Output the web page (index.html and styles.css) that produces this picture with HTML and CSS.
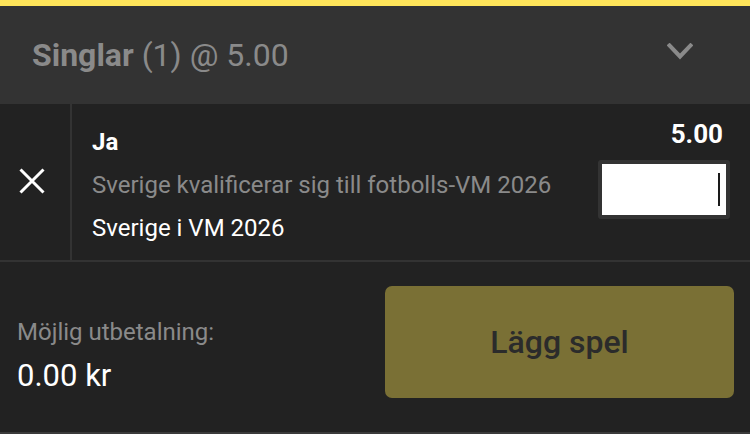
FILE: index.html
```html
<!DOCTYPE html>
<html lang="sv">
<head>
<meta charset="utf-8">
<title>Spelkupong</title>
<link rel="stylesheet" href="styles.css">
</head>
<body>
<div class="slip">
  <div class="accent"></div>
  <header class="slip-head">
    <div class="title"><b>Singlar</b> (1) @ 5.00</div>
    <svg class="chevron" width="26" height="18" viewBox="0 0 26 18" aria-hidden="true">
      <path d="M2.5 2.5 L13 13.5 L23.5 2.5" fill="none" stroke="#8a8a8a" stroke-width="4" stroke-linecap="square"/>
    </svg>
  </header>
  <section class="bet">
    <div class="remove">
      <svg width="26" height="26" viewBox="0 0 26 26" aria-hidden="true">
        <path d="M1.5 1.5 L24.5 24.5 M24.5 1.5 L1.5 24.5" stroke="#ffffff" stroke-width="3" fill="none"/>
      </svg>
    </div>
    <div class="sel">
      <div class="outcome">Ja</div>
      <div class="market">Sverige kvalificerar sig till fotbolls-VM 2026</div>
      <div class="event">Sverige i VM 2026</div>
    </div>
    <div class="stake">
      <div class="odds">5.00</div>
      <div class="input"><span class="caret"></span></div>
    </div>
  </section>
  <footer class="slip-foot">
    <div class="payout">
      <div class="label">Möjlig utbetalning:</div>
      <div class="amount">0.00 kr</div>
    </div>
    <button class="place">Lägg spel</button>
  </footer>
</div>
</body>
</html>
```

FILE: styles.css
```css
* { box-sizing: border-box; }
html, body { margin: 0; padding: 0; }
body {
  width: 750px;
  height: 434px;
  background: #222222;
  font-family: Roboto, "Noto Sans", "Liberation Sans", sans-serif;
  overflow: hidden;
}
.slip { width: 750px; }
.accent { height: 6px; background: #ffe55a; }

.slip-head {
  height: 98px;
  background: #333333;
  display: flex;
  align-items: center;
  padding: 0 57px 0 32px;
}
.title {
  flex: 1;
  font-size: 32px;
  line-height: 32px;
  color: #8a8a8a;
  font-weight: 400;
}
.title b { font-weight: 700; }
.chevron { margin-bottom: 6px; }

.bet {
  display: flex;
  height: 158px;
  border-bottom: 2px solid #333333;
}
.remove {
  width: 72px;
  border-right: 2px solid #333333;
  display: flex;
  align-items: center;
  justify-content: center;
  padding-right: 6px;
  padding-bottom: 2px;
}
.sel {
  flex: 1;
  padding: 24px 0 0 20px;
}
.outcome {
  font-size: 24px;
  line-height: 28px;
  font-weight: 700;
  color: #ffffff;
  margin-bottom: 8px;
}
.market, .event {
  font-size: 24px;
  line-height: 43px;
  white-space: nowrap;
}
.market { color: #8a8a8a; }
.event { color: #ffffff; }

.stake {
  width: 152px;
  padding: 15px 20px 0 0;
  display: flex;
  flex-direction: column;
  align-items: flex-end;
}
.odds {
  font-size: 26px;
  line-height: 30px;
  font-weight: 700;
  color: #ffffff;
  margin-right: 7px;
}
.input {
  margin-top: 11px;
  width: 132px;
  height: 59px;
  background: #ffffff;
  border: 4px solid #333333;
  border-radius: 3px;
  display: flex;
  align-items: center;
  justify-content: flex-end;
  padding-right: 6px;
}
.caret {
  width: 2px;
  height: 33px;
  background: #1a1a1a;
}

.slip-foot {
  height: 172px;
  display: flex;
  align-items: flex-start;
  padding: 24px 16px 0 17px;
  border-bottom: 2px solid #3a3a3a;
}
.payout {
  flex: 1;
  padding-top: 31px;
}
.label {
  font-size: 24px;
  line-height: 30px;
  color: #8a8a8a;
}
.amount {
  margin-top: 9px;
  font-size: 31px;
  line-height: 40px;
  color: #ffffff;
}
.place {
  width: 349px;
  height: 112px;
  border: 0;
  border-radius: 7px;
  background: #7a7035;
  color: #2b2b2b;
  font-family: Roboto, "Noto Sans", "Liberation Sans", sans-serif;
  font-size: 32px;
  font-weight: 500;
  padding: 0;
}
```
